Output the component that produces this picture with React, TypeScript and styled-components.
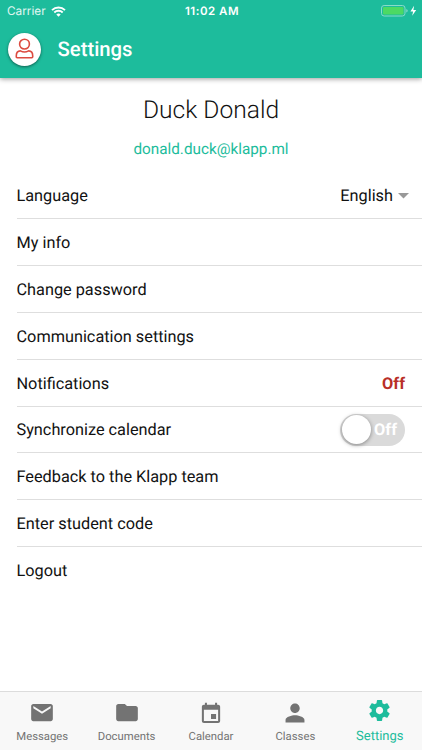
import React from "react";
import styled, { createGlobalStyle } from "styled-components";

const GlobalStyle = createGlobalStyle`
  * { box-sizing: border-box; }
  body {
    margin: 0;
    background: #fff;
    font-family: Roboto, sans-serif;
    color: #111;
    text-rendering: geometricPrecision;
  }
`;

const Screen = styled.div`
  width: 422px;
  height: 750px;
  display: flex;
  flex-direction: column;
  overflow: hidden;
  background: #fff;
`;

const Header = styled.header`
  height: 78px;
  flex: none;
  background: #1dbc9c;
  color: #fff;
  box-shadow: 0 1px 5px rgba(0, 0, 0, 0.4);
`;

const StatusBar = styled.div`
  height: 22px;
  display: grid;
  grid-template-columns: 1fr auto 1fr;
  align-items: center;
  padding: 0 5px 0 7px;
  font-family: Inter, sans-serif;
  font-size: 12px;
  line-height: 22px;
`;

const Carrier = styled.div`
  display: flex;
  align-items: center;
  gap: 5px;
  font-size: 11.8px;
  color: #e0f7f2;
`;

const Clock = styled.div`
  font-weight: 600;
  font-size: 11.5px;
  letter-spacing: 0.5px;
`;

const Power = styled.div`
  display: flex;
  justify-content: flex-end;
`;

const TitleBar = styled.div`
  height: 56px;
  display: flex;
  align-items: center;
  padding: 0 8px 2px;
  gap: 16.5px;
`;

const Avatar = styled.div`
  width: 33px;
  height: 33px;
  border-radius: 50%;
  background: #fff;
  display: flex;
  align-items: center;
  justify-content: center;
  box-shadow: 0 1px 3px rgba(0, 0, 0, 0.5);
`;

const Title = styled.h1`
  margin: 0;
  font-size: 20.3px;
  font-weight: 500;
  line-height: 24px;
`;

const Content = styled.main`
  flex: 1;
  min-height: 0;
`;

const Profile = styled.section`
  height: 94.3px;
  padding-top: 16px;
  text-align: center;
`;

const Name = styled.div`
  font-size: 24.6px;
  font-weight: 300;
  line-height: 34px;
`;

const Email = styled.div`
  margin-top: 11px;
  font-size: 15.3px;
  line-height: 20px;
  color: #1dbc9c;
`;

const List = styled.ul`
  list-style: none;
  margin: 0;
  padding: 0 0 0 16.5px;
`;

const Row = styled.li`
  height: 46.86px;
  display: flex;
  align-items: center;
  justify-content: space-between;
  padding-top: 0.8px;
  padding-right: 17px;
  font-size: 16.3px;
  border-bottom: 1px solid #dedede;

  &:last-child {
    border-bottom-color: transparent;
  }
`;

const Choice = styled.span`
  display: flex;
  align-items: center;
  gap: 5px;
  margin-right: -4px;
`;

const Caret = styled.svg`
  display: block;
  fill: #999;
`;

const OffLabel = styled.span`
  font-weight: 700;
  color: #b92f27;
`;

const Toggle = styled.span`
  width: 65px;
  height: 32px;
  border-radius: 16px;
  background: #dadada;
  display: flex;
  align-items: center;
  justify-content: space-between;
  padding: 0 8px 0 2px;
  color: #fff;
  font-weight: 700;
`;

const Knob = styled.span`
  width: 29px;
  height: 29px;
  border-radius: 50%;
  background: #fff;
  box-shadow: 0 1px 4px rgba(0, 0, 0, 0.4);
`;

const TabBar = styled.nav`
  flex: none;
  height: 59px;
  display: grid;
  grid-template-columns: repeat(5, 1fr);
  background: #f8f8f8;
  border-top: 1px solid #dcdcdc;
`;

const Tab = styled.div<{ $active?: boolean }>`
  display: flex;
  flex-direction: column;
  align-items: center;
  padding-top: ${(p) => (p.$active ? 6 : 8)}px;
  gap: ${(p) => (p.$active ? 4 : 1)}px;
  color: ${(p) => (p.$active ? "#1dbc9c" : "#737373")};
  font-size: ${(p) => (p.$active ? 13 : 11.3)}px;
  line-height: 20px;

  svg {
    display: block;
    flex: none;
    fill: currentColor;
  }
`;

const rows: { label: string; end?: React.ReactNode }[] = [
  {
    label: "Language",
    end: (
      <Choice>
        English
        <Caret width="11" height="6" viewBox="0 0 11 6"><path d="M0 0h11L5.5 5.5z" /></Caret>
      </Choice>
    ),
  },
  { label: "My info" },
  { label: "Change password" },
  { label: "Communication settings" },
  { label: "Notifications", end: <OffLabel>Off</OffLabel> },
  { label: "Synchronize calendar", end: <Toggle><Knob />Off</Toggle> },
  { label: "Feedback to the Klapp team" },
  { label: "Enter student code" },
  { label: "Logout" },
];

const tabs = [
  { label: "Messages", box: "0 0.4 24 24", path: "M20 4H4c-1.1 0-1.99.9-1.99 2L2 18c0 1.1.9 2 2 2h16c1.1 0 2-.9 2-2V6c0-1.1-.9-2-2-2zm0 4l-8 5-8-5V6l8 5 8-5v2z" },
  { label: "Documents", box: "0 0.4 24 24", path: "M10 4H4c-1.1 0-1.99.9-1.99 2L2 18c0 1.1.9 2 2 2h16c1.1 0 2-.9 2-2V8c0-1.1-.9-2-2-2h-8l-2-2z" },
  { label: "Calendar", box: "-0.8 -1.7 25.6 25.6", path: "M17 12h-5v5h5v-5zM16 1v2H8V1H6v2H5c-1.11 0-1.99.9-1.99 2L3 19c0 1.1.89 2 2 2h14c1.1 0 2-.9 2-2V5c0-1.1-.9-2-2-2h-1V1h-2zm3 18H5V8h14v11z" },
  { label: "Classes", box: "1 1 22 22", path: "M12 12c2.21 0 4-1.79 4-4s-1.79-4-4-4-4 1.79-4 4 1.79 4 4 4zm0 2c-2.67 0-8 1.34-8 4v2h16v-2c0-2.66-5.33-4-8-4z" },
  { label: "Settings", box: "0 0 24 24", active: true, path: "M19.43 12.98c.04-.32.07-.64.07-.98s-.03-.66-.07-.98l2.11-1.65c.19-.15.24-.42.12-.64l-2-3.46c-.12-.22-.39-.3-.61-.22l-2.49 1c-.52-.4-1.08-.73-1.69-.98l-.38-2.65C14.46 2.18 14.25 2 14 2h-4c-.25 0-.46.18-.49.42l-.38 2.65c-.61.25-1.17.59-1.69.98l-2.49-1c-.23-.09-.49 0-.61.22l-2 3.46c-.13.22-.07.49.12.64l2.11 1.65c-.04.32-.07.65-.07.98s.03.66.07.98l-2.11 1.65c-.19.15-.24.42-.12.64l2 3.46c.12.22.39.3.61.22l2.49-1c.52.4 1.08.73 1.69.98l.38 2.65c.03.24.24.42.49.42h4c.25 0 .46-.18.49-.42l.38-2.65c.61-.25 1.17-.59 1.69-.98l2.49 1c.23.09.49 0 .61-.22l2-3.46c.12-.22.07-.49-.12-.64l-2.11-1.65zM12 15.5c-1.93 0-3.5-1.57-3.5-3.5s1.57-3.5 3.5-3.5 3.5 1.57 3.5 3.5-1.57 3.5-3.5 3.5z" },
];

export default function App() {
  return (
    <Screen>
      <GlobalStyle />
      <Header>
        <StatusBar>
          <Carrier>
            Carrier
            <svg width="15" height="11" viewBox="0 0 15 11" fill="none" stroke="#fff" strokeWidth="1.9">
              <path d="M1 4.1a9.3 9.3 0 0 1 13 0" />
              <path d="M3.3 6.5a6 6 0 0 1 8.4 0" />
              <path d="M7.5 10.7 5.3 8.5a3.2 3.2 0 0 1 4.4 0z" fill="#fff" stroke="none" />
            </svg>
          </Carrier>
          <Clock>11:02 AM</Clock>
          <Power>
            <svg width="36" height="12" viewBox="0 0 36 12">
              <rect x="0.5" y="0.5" width="23.5" height="10.5" rx="2.6" fill="none" stroke="#8adbc9" />
              <rect x="2" y="2" width="20.5" height="7.5" rx="1.2" fill="#4cd964" />
              <path d="M25.3 4v3.6q1.4-.5 1.4-1.8T25.3 4z" fill="#8adbc9" />
              <path d="M33.1.8 29.4 6.4h2.7l-.9 4.3 4-5.7h-2.8z" fill="#fff" />
            </svg>
          </Power>
        </StatusBar>
        <TitleBar>
          <Avatar>
            <svg width="19" height="22" viewBox="0 0 19 22" fill="none" stroke="#dc4b40" strokeWidth="1.6" strokeLinejoin="round">
              <circle cx="9.5" cy="6.1" r="4.9" />
              <path d="M5.4 12.9c2.6 1.4 5.6 1.4 8.2 0 2.6.1 4.1 2 4.1 4.9v1c0 .6-.3.9-.9.9H2.2c-.6 0-.9-.3-.9-.9v-1c0-2.9 1.5-4.8 4.1-4.9z" />
            </svg>
          </Avatar>
          <Title>Settings</Title>
        </TitleBar>
      </Header>
      <Content>
        <Profile>
          <Name>Duck Donald</Name>
          <Email>donald.duck@klapp.ml</Email>
        </Profile>
        <List>
          {rows.map((row) => (
            <Row key={row.label}>
              <span>{row.label}</span>
              {row.end}
            </Row>
          ))}
        </List>
      </Content>
      <TabBar>
        {tabs.map((tab) => (
          <Tab key={tab.label} $active={tab.active}>
            <svg width={tab.active ? 25 : 26} height={tab.active ? 25 : 26} viewBox={tab.box}>
              <path d={tab.path} />
            </svg>
            <span>{tab.label}</span>
          </Tab>
        ))}
      </TabBar>
    </Screen>
  );
}
